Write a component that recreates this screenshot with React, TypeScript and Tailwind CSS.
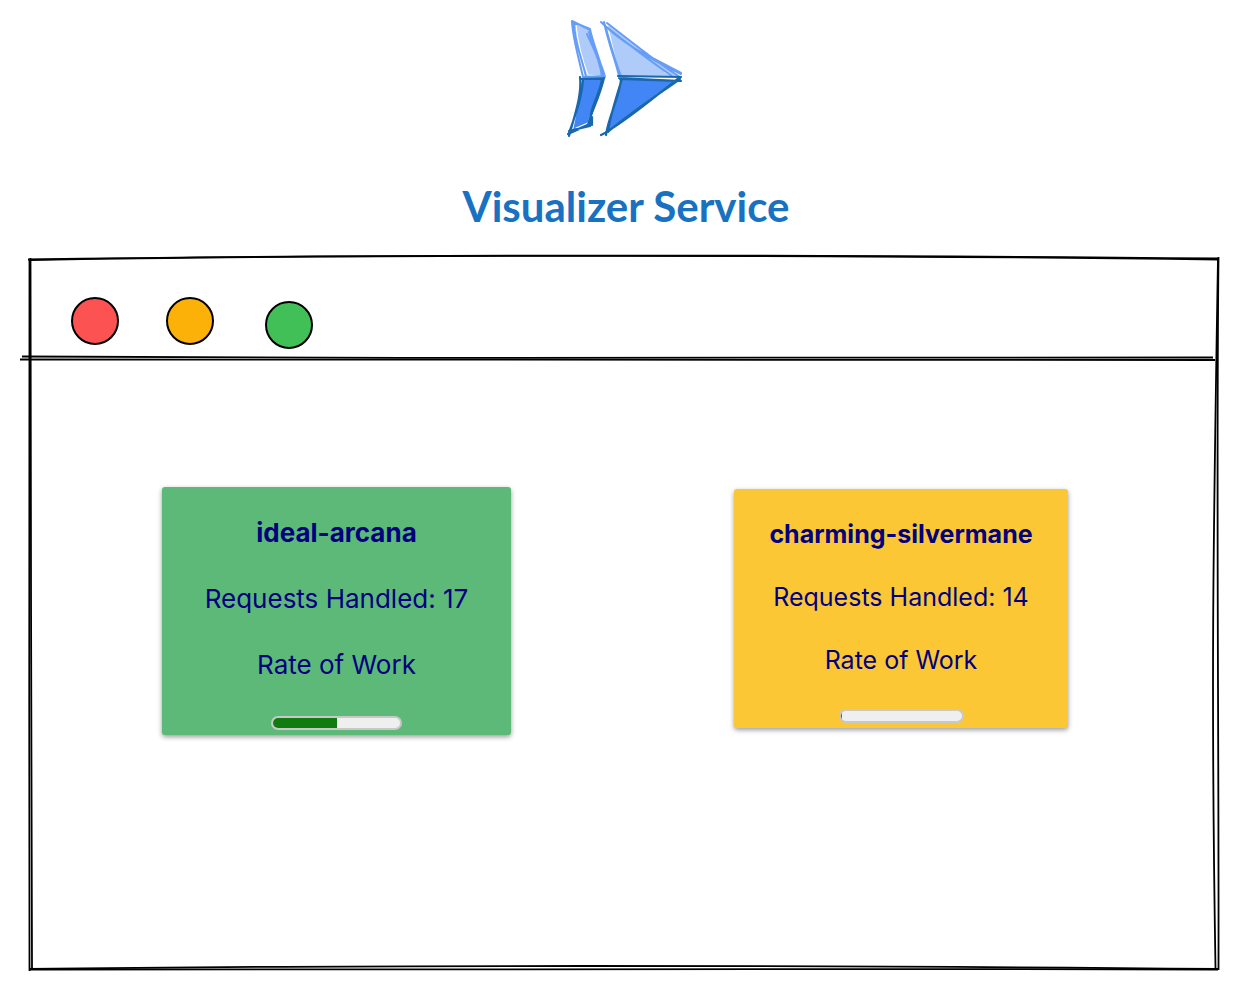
type Worker = {
  name: string;
  handled: number;
  rate: number;
  card: string;
  bar: string;
};

const workers: Worker[] = [
  {
    name: "ideal-arcana",
    handled: 17,
    rate: 50,
    card: "w-[349px] bg-[#5cb977] gap-[30px] text-[26px] leading-9",
    bar: "w-[131px]",
  },
  {
    name: "charming-silvermane",
    handled: 14,
    rate: 1,
    card: "mt-0.5 w-[334px] bg-[#fcc735] gap-7 text-[25px] leading-[35px]",
    bar: "w-[125px]",
  },
];

function Logo() {
  return (
    <svg viewBox="0 0 120 120" className="h-30 w-30" fill="none" strokeLinecap="round" strokeLinejoin="round" aria-hidden="true">
      <path d="M8 4 24 12 38 58 20 59Z" fill="#aecbfa" />
      <path d="M42 6 112 57 54 58Z" fill="#aecbfa" />
      <path d="M17 61 37 61 23 106 7 112Z" fill="#4285f4" />
      <path d="M55 60 110 61 41 113Z" fill="#4285f4" />
      <path d="M10 6C12 26 17 43 22 56L33 57 M99 53 108 58 M37 66C33 79 27 88 22 104L10 109" stroke="#fff" strokeWidth="1.2" />
      <g stroke="#669df6" strokeWidth="2">
        <path d="M6 2 24 11 24 14 M7 3 24 10 M6 3C7 20 13 40 17 58 M8 3C8 22 16 39 20 58 M24 10C26 22 35 42 38 58 M21 15C25 25 34 38 36 58 M18 58 38 57 M23 13C29 34 36 45 39 58" />
        <path d="M35 3 C54 22 84 40 115 55 M41 4C62 20 91 44 114 58 M38 6C62 25 84 42 106 57 M39 6C44 23 49 43 55 57 M38 3C42 23 50 43 53 57 M73 32 115 54" />
      </g>
      <g stroke="#1967ad" strokeWidth="2.2">
        <path d="M14 58C16 76 9 95 3 117 M17 60C16 79 9 97 3 114 M2 115 22 106 M3 112 24 107 M14 60 38 59 M17 60 37 60 M36 60C34 76 23 89 24 106 M38 59C33 80 25 93 22 106 M26 98V106" />
        <path d="M52 57 115 58 M53 59 115 62 M54 60 111 62 M55 60C54 78 43 95 40 116 M56 60C50 79 44 97 42 113 M35 116 43 112C64 94 90 77 114 60 M40 113C64 99 88 78 114 58" />
      </g>
    </svg>
  );
}

function SketchFrame() {
  return (
    <svg
      viewBox="0 0 1200 720"
      preserveAspectRatio="none"
      className="pointer-events-none absolute inset-0 h-full w-full overflow-visible"
      fill="none"
      stroke="#000"
      strokeWidth="1.8"
      aria-hidden="true"
    >
      <path d="M8 5.5C300 1 700 0 1199 4.5" />
      <path d="M9 6C350 0 850 1 1198 5.5" />
      <path d="M9.5 5C8.5 240 9.5 480 9.5 717" />
      <path d="M10.5 4C9.5 240 12.5 480 12 716" />
      <path d="M1198.500 3C1196 240 1199 480 1198.500 716" />
      <path d="M1198 4C1193 300 1191 440 1195.500 715" />
      <path d="M9 715C300 711 800 711 1199 715" />
      <path d="M10 715.500C400 716.500 800 714 1198 715.500" />
      <path d="M2 102.500C400 104 700 105.500 1193 103.500" />
      <path d="M0 105.500C400 105 800 104.500 1195 106" />
    </svg>
  );
}

const dots = ["bg-[#fc5252]", "bg-[#fcb109]", "mt-1 ml-1 bg-[#41c057]"];

function WorkerCard({ worker }: { worker: Worker }) {
  return (
    <article
      className={`flex flex-col items-center rounded-[3px] pt-7 pb-[5px] text-[#000080] shadow-[0_2px_5px_rgba(0,0,0,0.4)] ${worker.card}`}
    >
      <h2 className="font-bold">{worker.name}</h2>
      <p>Requests Handled: {worker.handled}</p>
      <p>Rate of Work</p>
      <div
        role="progressbar"
        aria-label={`Rate of work for ${worker.name}`}
        aria-valuenow={worker.rate}
        className={`mt-[3px] h-3.5 overflow-hidden rounded-full border-2 border-[#c8c8c8] bg-[#efefef] ${worker.bar}`}
      >
        <div className="h-full bg-[#107c10]" style={{ width: `${worker.rate}%` }} />
      </div>
    </article>
  );
}

export default function App() {
  return (
    <main className="flex min-h-screen flex-col bg-white pr-4 pb-3.5 pl-5 font-['Inter',sans-serif]">
      <header className="flex flex-col items-center pt-[19px] pl-3">
        <Logo />
        <h1 className="mt-10 font-['Virgil','Lato',sans-serif] text-[42px] leading-[54px] font-bold text-[#1971c2]">
          Visualizer Service
        </h1>
      </header>
      <section className="relative mt-[21px] flex grow flex-col">
        <SketchFrame />
        <div className="flex h-[104px] gap-[47px] pt-[43px] pl-[51px]">
          {dots.map((dot) => (
            <span key={dot} className={`size-12 rounded-full border-2 border-black ${dot}`} />
          ))}
        </div>
        <div className="flex flex-wrap items-start justify-between gap-8 pt-[129px] pr-[152px] pb-12 pl-[142px]">
          {workers.map((worker) => (
            <WorkerCard key={worker.name} worker={worker} />
          ))}
        </div>
      </section>
    </main>
  );
}
